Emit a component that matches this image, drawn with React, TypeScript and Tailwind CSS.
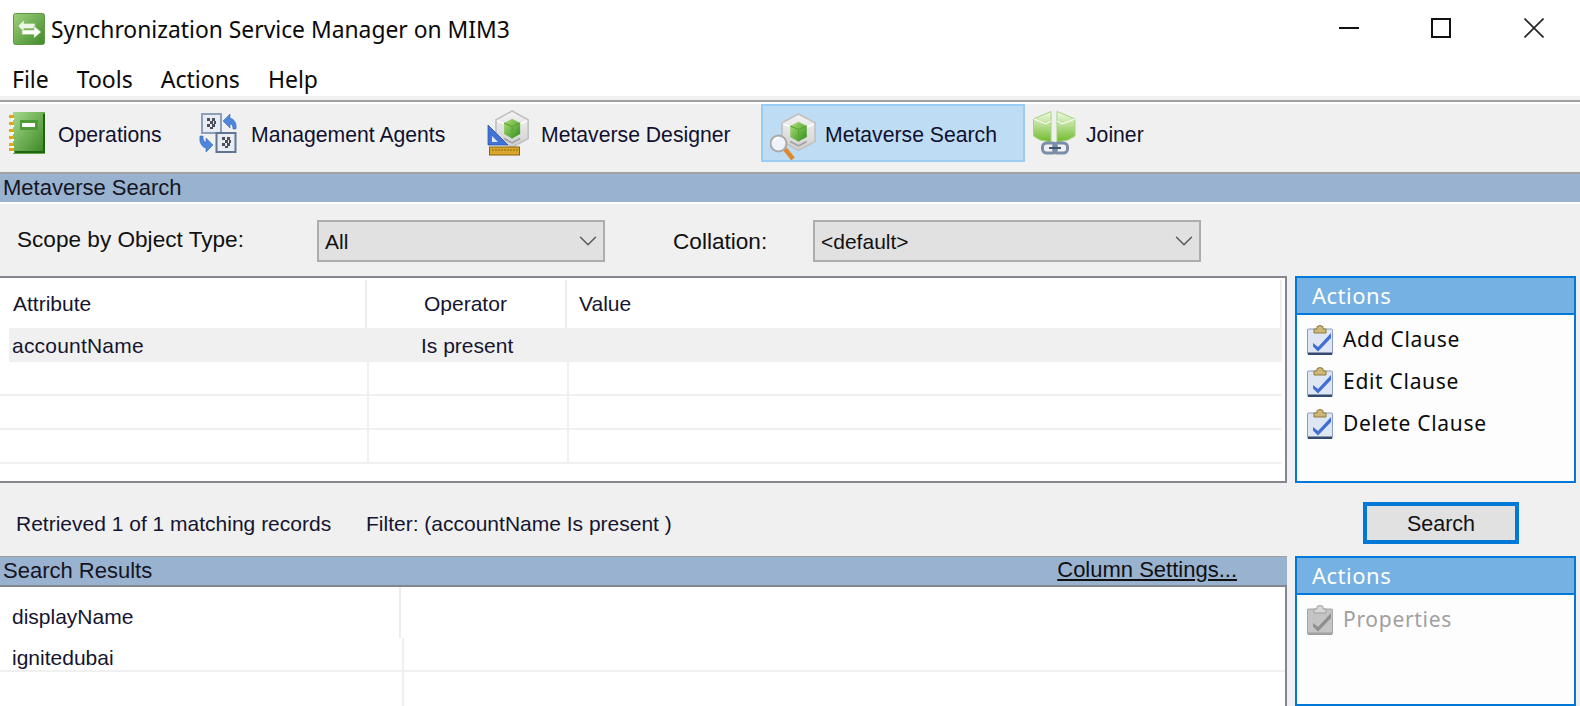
import { ReactNode } from 'react';
import { ChevronDown } from 'lucide-react';

const sans = 'font-["Liberation_Sans",Arial,sans-serif]';
const noto = 'font-["Noto_Sans",sans-serif]';

const AppIcon = () => (
  <svg width="32" height="32" viewBox="0 0 32 32">
    <defs>
      <linearGradient id="appIconFill" x1="0" y1="0" x2="1" y2="1">
        <stop offset="0" stopColor="#9fd07c" />
        <stop offset="1" stopColor="#3f8a2a" />
      </linearGradient>
    </defs>
    <rect x="0.5" y="0.5" width="31" height="31" rx="2" fill="url(#appIconFill)" stroke="#5c9a45" />
    <path d="M5 13 L11 7 V10.5 H22 V15.5 H11 V19 Z" fill="#eef6e6" stroke="#8fc272" strokeWidth="0.6" />
    <path d="M28 19 L21 25 V21.5 H9 V17 H21 V13 Z" fill="#ffffff" stroke="#8fc272" strokeWidth="0.6" />
  </svg>
);

const NotebookIcon = () => (
  <svg width="36" height="42" viewBox="0 0 36 42">
    <defs>
      <linearGradient id="bookFill" x1="0" y1="0" x2="1" y2="1">
        <stop offset="0" stopColor="#a5d98c" />
        <stop offset="1" stopColor="#3e8a26" />
      </linearGradient>
    </defs>
    <rect x="4" y="0" width="32" height="42" fill="#62a846" />
    <rect x="4" y="0" width="30" height="39" fill="url(#bookFill)" />
    <path d="M34 2 H36 V41 H6 V39 H34 Z" fill="#1f6410" />
    <rect x="11" y="8" width="18" height="10" fill="#4f9a38" />
    <rect x="13" y="11" width="13" height="4" fill="#ffffff" />
    {[3, 10, 17, 24, 31, 36].map((y) => (
      <g key={y}>
        <rect x="0" y={y} width="5" height="3" fill="#e6a312" />
        <rect x="2" y={y + 3} width="3" height="2" fill="#ffffff" />
      </g>
    ))}
  </svg>
);

const AgentsIcon = () => (
  <svg width="38" height="40" viewBox="0 0 38 40">
    <rect x="3" y="1" width="19" height="19" fill="#e8edf4" stroke="#8ca0bb" strokeWidth="2" />
    <path d="M8 5h3v3h-3zM13 5h3v3h-3zM11 8h3v3h-3zM15 8h2v3h-2zM8 11h3v3h-3zM13 11h3v3h-3zM11 14h3v2h-3z" fill="#4c4f55" />
    <rect x="17.5" y="20" width="19" height="19" fill="#e8edf4" stroke="#5f7592" strokeWidth="2" />
    <path d="M23 24h3v3h-3zM28 24h3v3h-3zM26 27h3v3h-3zM30 27h2v3h-2zM23 30h3v3h-3zM28 30h3v3h-3zM26 33h3v2h-3z" fill="#4c4f55" />
    <path d="M24 8 L31 1 V5 C35 6 38 10 37 16 L34 16 C34 13 33 11 31 11 V15 Z" fill="#4d86dc" stroke="#2e5fb0" strokeWidth="0.5" />
    <path d="M14 32 L7 39 V35 C3 34 0 30 1 23 L4 23 C4 27 5 29 7 29 V25 Z" fill="#4d86dc" stroke="#2e5fb0" strokeWidth="0.5" />
  </svg>
);

const Cube = ({ id }: { id: string }) => (
  <g>
    <defs>
      <linearGradient id={id} x1="0" y1="0" x2="1" y2="1">
        <stop offset="0" stopColor="#b3e27a" />
        <stop offset="1" stopColor="#2f8d1c" />
      </linearGradient>
      <linearGradient id={`${id}Shell`} x1="0" y1="0" x2="0" y2="1">
        <stop offset="0" stopColor="#f4f4f4" />
        <stop offset="1" stopColor="#cfcfcf" />
      </linearGradient>
    </defs>
    <path d="M0 8 L14 0 L28 8 V25 L14 33 L0 25 Z" fill={`url(#${id}Shell)`} stroke="#c2c2c2" strokeWidth="1.5" />
    <path d="M1 9 L8 12 M27 9 L21 12" fill="none" stroke="#ffffff" strokeWidth="1.2" />
    <path d="M7 11 L14 7 L21 11 V21 L14 25 L7 21 Z" fill={`url(#${id})`} />
    <path d="M14 14 V25 M7 11 L14 14 L21 11" fill="none" stroke="#5da52f" strokeWidth="1" />
    <path d="M7 25 L14 29 L21 25" fill="none" stroke="#a0a0a0" strokeWidth="1.4" />
  </g>
);

const DesignerIcon = () => (
  <svg width="42" height="46" viewBox="0 0 42 46">
    <g transform="translate(9 1) scale(1.15 1.1)">
      <Cube id="cubeDesigner" />
    </g>
    <path d="M1 15 L21 35 H1 Z" fill="#3f73d8" stroke="#2c55a8" strokeWidth="0.8" />
    <path d="M5 26 L11 32 H5 Z" fill="#dfe8f8" />
    <rect x="2.5" y="37" width="30" height="8" fill="#d9a52b" stroke="#8a6410" strokeWidth="1" />
    <path d="M6 39v2M9 39v2M12 39v2M15 39v2M18 39v2M21 39v2M24 39v2M27 39v2M30 39v2" stroke="#8a6410" strokeWidth="1" />
  </svg>
);

const SearchIcon = () => (
  <svg width="46" height="54" viewBox="0 0 46 54">
    <g transform="translate(12 8) scale(1.18 1.1)">
      <Cube id="cubeSearch" />
    </g>
    <path d="M15 43 L23 53" stroke="#dd8a2e" strokeWidth="4.5" />
    <circle cx="8.5" cy="37.5" r="8" fill="#eef3fb" stroke="#a9a9a9" strokeWidth="2" />
    <path d="M4 35 A5 5 0 0 1 9 32" fill="none" stroke="#ffffff" strokeWidth="2" />
  </svg>
);

const JoinerIcon = () => (
  <svg width="44" height="44" viewBox="0 0 44 44">
    <defs>
      <linearGradient id="joinerFill" x1="0" y1="0" x2="0" y2="1">
        <stop offset="0" stopColor="#f3fae6" />
        <stop offset="1" stopColor="#6fbb2a" />
      </linearGradient>
    </defs>
    <path d="M0.5 8 L18 0.5 V31 L7 29 L0.5 25 Z" fill="url(#joinerFill)" stroke="#a6d37f" strokeWidth="1" />
    <path d="M42 8 L24 0.5 V31 L35 29 L42 25 Z" fill="url(#joinerFill)" stroke="#a6d37f" strokeWidth="1" />
    <path d="M1 8 L13 13 L18 10 M42 8 L29 13 L24 10" fill="none" stroke="#ffffff" strokeWidth="1" />
    <rect x="9.5" y="32" width="14" height="10" rx="4" fill="none" stroke="#7b8ea8" strokeWidth="3" />
    <rect x="20.5" y="32" width="14" height="10" rx="4" fill="none" stroke="#7b8ea8" strokeWidth="3" />
    <path d="M16 37 H28" stroke="#3f5470" strokeWidth="2" />
  </svg>
);

const ClipboardIcon = ({ disabled = false }: { disabled?: boolean }) => (
  <svg width="26" height="30" viewBox="0 0 26 30">
    <rect x="0.5" y="4" width="25" height="25.5" rx="1" fill={disabled ? '#c4c4c4' : '#dfe6f3'} stroke={disabled ? '#a6a6a6' : '#8a9cc0'} />
    <rect x="1" y="27.5" width="24" height="2.5" fill={disabled ? '#a0a0a0' : '#34496e'} />
    <path d="M7 8 V4 H10 V1.5 Q13 -0.5 16 1.5 V4 H19 V8 Z" fill={disabled ? '#d8d8d8' : '#cdb878'} stroke={disabled ? '#a0a0a0' : '#8f7b3e'} />
    <path d="M6 18 L11 22 L24 8 V13 L11 26.5 L6 21.5 Z" fill={disabled ? '#8e8e8e' : '#3f6fd4'} />
  </svg>
);

const ToolbarItem = ({ icon, label, active, width, iconGap }: { icon: ReactNode; label: string; active?: boolean; width: string; iconGap: string }) => (
  <div className={`flex h-[58px] items-center border-2 ${width} ${iconGap} ${active ? 'border-[#99cdf5] bg-[#bedcf3]' : 'border-transparent'}`}>
    {icon}
    <span className={`mt-[4px] whitespace-nowrap text-[21.2px] text-[#101030] ${sans}`}>{label}</span>
  </div>
);

const SelectBox = ({ value, width }: { value: string; width: string }) => (
  <div className={`flex h-[42px] items-center justify-between border-2 border-[#adadad] bg-[#e1e1e1] pl-[6px] pr-0 text-[21px] text-[#111] ${sans} ${width}`}>
    <span className="mt-[2px]">{value}</span>
    <ChevronDown className="h-[30px] w-[30px] text-[#555]" strokeWidth={1.1} />
  </div>
);

const ActionsPanel = ({ children }: { children: ReactNode }) => (
  <div className="flex h-full w-[281px] flex-col border-2 border-[#0078d7] bg-[#fdfdfd]">
    <div className={`flex h-[37px] shrink-0 items-center border-b-2 border-[#0078d7] bg-[#75b1e3] pl-[15px] text-[22px] tracking-[0.5px] text-white ${noto}`}>
      Actions
    </div>
    <div className="flex flex-col pl-[10px] pt-[4px]">{children}</div>
  </div>
);

const ActionItem = ({ label, disabled = false }: { label: string; disabled?: boolean }) => (
  <div className={`flex h-[42px] items-center gap-[10px] text-[21px] tracking-[0.7px] ${noto} ${disabled ? 'text-[#a0a0a0]' : 'text-[#0a0a0a]'}`}>
    <ClipboardIcon disabled={disabled} />
    <span>{label}</span>
  </div>
);

const SectionBar = ({ title, children }: { title: string; children?: ReactNode }) => (
  <div className={`flex h-[28px] items-center justify-between bg-[#98b2d0] pl-[3px] text-[22px] text-[#151522] ${sans}`}>
    <span className="mb-[1px]">{title}</span>
    {children}
  </div>
);

const ClauseRow = () => (
  <div className="flex h-[34px]">
    <div className="w-[369px] border-r-2 border-b-2 border-[#f0f0f0]" />
    <div className="w-[200px] border-r-2 border-b-2 border-[#f0f0f0]" />
    <div className="mr-[3px] flex-1 border-b-2 border-[#f0f0f0]" />
  </div>
);

export default function App() {
  return (
    <div className={`h-[706px] w-[1580px] overflow-hidden bg-white ${sans}`}>
      {/* Title bar */}
      <div className="flex h-[50px] items-center justify-between pl-[13px]">
        <div className="flex items-center gap-[6px] pt-[8px]">
          <AppIcon />
          <span className={`mt-[3px] text-[22.85px] text-[#0a0a0a] ${noto}`}>Synchronization Service Manager on MIM3</span>
        </div>
        <div className="flex items-center pt-[6px]">
          <div className="flex w-[91px] justify-center"><div className="h-[2px] w-[20px] bg-[#111]" /></div>
          <div className="flex w-[93px] justify-center"><div className="h-[20px] w-[20px] border-2 border-[#111]" /></div>
          <div className="flex w-[93px] justify-center">
            <svg width="20" height="20" viewBox="0 0 20 20"><path d="M0.5 0.5 L19.5 19.5 M19.5 0.5 L0.5 19.5" stroke="#222" strokeWidth="1.6" /></svg>
          </div>
        </div>
      </div>

      {/* Menu */}
      <div className={`flex h-[46px] items-center gap-[28px] pl-[12px] pt-[12px] text-[23px] text-[#0a0a0a] ${noto}`}>
        <span>File</span>
        <span>Tools</span>
        <span>Actions</span>
        <span>Help</span>
      </div>
      <div className="h-[4px] bg-[#f0f0f0]" />
      <div className="h-[2px] bg-[#a0a0a0]" />
      <div className="h-[2px] bg-white" />

      {/* Toolbar */}
      <div className="flex h-[68px] items-start bg-[#f0f0f0]">
        <ToolbarItem icon={<NotebookIcon />} label="Operations" width="w-[190px] pl-[7px]" iconGap="gap-[13px]" />
        <ToolbarItem icon={<AgentsIcon />} label="Management Agents" width="w-[290px] pl-[7px]" iconGap="gap-[14px]" />
        <ToolbarItem icon={<DesignerIcon />} label="Metaverse Designer" width="w-[281px] pl-[5px]" iconGap="gap-[12px]" />
        <ToolbarItem icon={<SearchIcon />} label="Metaverse Search" active width="w-[264px] pl-[7px]" iconGap="gap-[9px]" />
        <ToolbarItem icon={<JoinerIcon />} label="Joiner" width="w-[130px] pl-[6px]" iconGap="gap-[9px]" />
      </div>

      <div className="h-[2px] bg-[#a0a0a0]" />
      <SectionBar title="Metaverse Search" />
      <div className="h-[2px] bg-white" />

      {/* Scope row */}
      <div className="flex h-[72px] items-start bg-[#f0f0f0] pt-[16px] text-[22.6px] text-[#111]">
        <span className="ml-[17px] mt-[3px] w-[300px]">Scope by Object Type:</span>
        <SelectBox value="All" width="w-[288px]" />
        <span className="ml-[68px] mt-[5px] w-[140px]">Collation:</span>
        <SelectBox value="<default>" width="w-[388px]" />
      </div>

      {/* Clauses */}
      <div className="flex h-[207px] bg-[#f0f0f0]">
        <div className="mr-[8px] h-full w-[1287px] border-y-2 border-r-2 border-[#85868f] bg-white">
          <div className={`flex h-[50px] pt-[2px] text-[21px] text-[#151530] ${sans}`}>
            <div className="flex w-[367px] items-center border-r-2 border-[#ededed] pl-[13px]">Attribute</div>
            <div className="flex w-[200px] items-center border-r-2 border-[#ededed] pl-[57px]">Operator</div>
            <div className="mr-[3px] flex flex-1 items-center border-r-2 border-[#ededed] pl-[12px]">Value</div>
          </div>
          <div className={`ml-[9px] mr-[3px] flex h-[34px] items-center bg-[#f0f0f0] pt-[2px] text-[21px] text-[#151530] ${sans}`}>
            <span className="w-[412px] pl-[3px] tracking-[0.2px]">accountName</span>
            <span>Is present</span>
          </div>
          <ClauseRow />
          <ClauseRow />
          <ClauseRow />
        </div>
        <ActionsPanel>
          <ActionItem label="Add Clause" />
          <ActionItem label="Edit Clause" />
          <ActionItem label="Delete Clause" />
        </ActionsPanel>
      </div>

      {/* Status row */}
      <div className={`flex h-[73px] items-start bg-[#f0f0f0] pt-[19px] text-[21px] text-[#151530] ${sans}`}>
        <span className="ml-[16px] mt-[6px] w-[350px]">Retrieved 1 of 1 matching records</span>
        <span className="mt-[6px] w-[997px]">Filter: (accountName Is present )</span>
        <div className="flex h-[42px] w-[156px] items-center justify-center border-4 border-[#0078d7] bg-[#e1e1e1] pt-[2px] text-[21.5px] text-[#111]">Search</div>
      </div>

      {/* Results */}
      <div className="flex h-[150px] bg-[#f0f0f0]">
        <div className="mr-[8px] flex w-[1287px] flex-col">
          <div className="h-[2px] bg-[#a0a0a0]" />
          <SectionBar title="Search Results">
            <span className="mb-[3px] mr-[50px] text-[22px] text-[#101010] underline">Column Settings...</span>
          </SectionBar>
          <div className="h-[2px] bg-white" />
          <div className="flex-1 border-t-2 border-r-2 border-[#85868f] bg-white">
            <div className="flex h-[51px] text-[21px] text-[#151530]">
              <div className="flex w-[401px] items-center border-r-2 border-[#ededed] pl-[12px] pt-[8px]">displayName</div>
            </div>
            <div className="flex h-[34px] border-b-2 border-[#f0f0f0] text-[21px] text-[#151530]">
              <div className="w-[404px] border-r-2 border-[#f0f0f0] pl-[12px] pt-[4px]">ignitedubai</div>
            </div>
            <div className="h-[34px] w-[404px] border-r-2 border-[#f0f0f0]" />
          </div>
        </div>
        <ActionsPanel>
          <ActionItem label="Properties" disabled />
        </ActionsPanel>
      </div>
    </div>
  );
}
